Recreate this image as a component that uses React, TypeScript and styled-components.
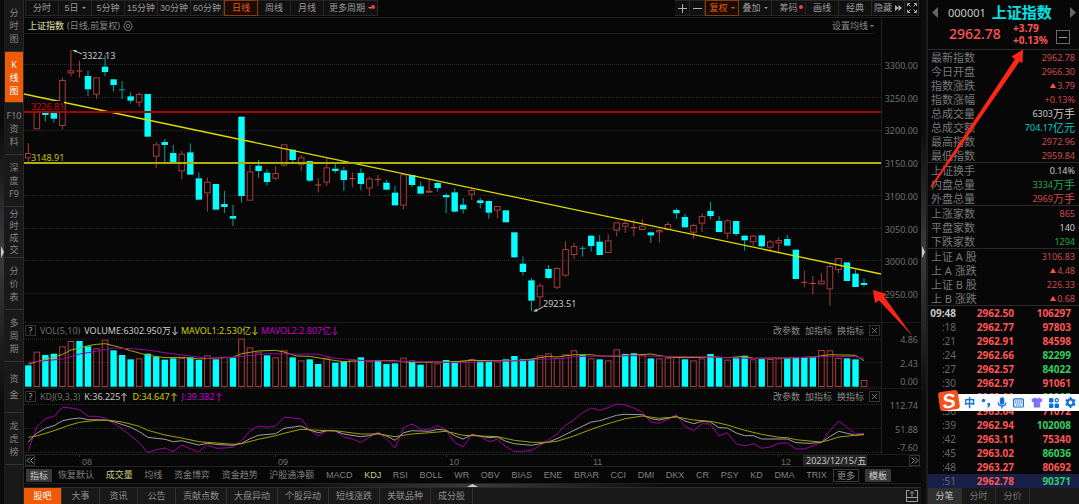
import React from "react";
import styled, { createGlobalStyle, css } from "styled-components";

const C = {
  bg: "#070707",
  line: "#222222",
  dim: "#6e6e6e",
  text: "#8a8a8a",
  light: "#c8c8c8",
  orange: "#ee5a06",
  red: "#cf4a4a",
  redHi: "#ff5555",
  green: "#22aa4c",
  greenHi: "#33cf5e",
  cyan: "#00ffff",
  yellow: "#cfcf00",
  magenta: "#c800c8",
};

const Global = createGlobalStyle`
  * { box-sizing: border-box; }
  body {
    margin: 0;
    background: ${C.bg};
    color: ${C.text};
    font: 9px/12px "Noto Sans", "Noto Sans CJK SC", sans-serif;
  }
  button {
    margin: 0;
    padding: 0;
    border: 0;
    background: none;
    color: inherit;
    font: inherit;
    white-space: nowrap;
    cursor: pointer;
  }
  svg { display: block; flex: none; }
`;

/* ---------- page frame ---------- */

const Page = styled.div`
  position: relative;
  display: grid;
  grid-template-columns: 5px 19px minmax(0, 1fr) 6px 152px;
  min-height: 100vh;
`;

const Rail = styled.div`
  display: flex;
  align-items: center;
  justify-content: center;
  background: linear-gradient(#0c0c0c 25%, #3c3c3c 50%, #0c0c0c 80%);
  border-right: 1px solid #1c1c1c;
`;

const Column = styled.main`
  display: flex;
  flex-direction: column;
  min-width: 0;
`;

/* ---------- left navigation ---------- */

const SideNav = styled.nav`
  display: flex;
  flex-direction: column;
  padding-bottom: 39px;
  background: #191919;
  border-right: 1px solid #2a2a2a;
`;

const SideItem = styled.button<{ $active?: boolean; $pitch?: number }>`
  flex: 1;
  display: flex;
  flex-direction: column;
  align-items: center;
  justify-content: center;
  line-height: ${(p) => p.$pitch ?? 13}px;
  color: ${(p) => (p.$active ? "#fff" : "#858585")};
  background: ${(p) => (p.$active ? C.orange : "transparent")};
  border-bottom: 1px solid #343434;
`;

/* ---------- top toolbar ---------- */

const Toolbar = styled.div`
  display: flex;
  height: 18px;
  padding: 0 2px 1px 1px;
  border-bottom: 1px solid #1d1d1d;
`;

const Spacer = styled.div`
  flex: 1;
`;

const ToolButton = styled.button<{ $w?: number; $active?: boolean }>`
  position: relative;
  display: flex;
  align-items: center;
  justify-content: center;
  gap: 3px;
  width: ${(p) => p.$w ?? 33}px;
  font-family: "Liberation Sans", "Noto Sans CJK SC", sans-serif;
  color: #9a9a9a;
  background: #101010;
  border: 1px solid #262626;
  border-left-width: 0;
  &:first-child { border-left-width: 1px; }
  ${(p) =>
    p.$active &&
    css`
      color: ${C.orange};
      background: #180c04;
      border: 1px solid #8a3a0c;
    `}
`;

const Caret = styled.span`
  border: 2px solid transparent;
  border-top-color: currentColor;
  border-bottom-width: 0;
`;

const Dot = styled.span`
  position: absolute;
  top: 4px;
  right: 2px;
  width: 4px;
  height: 4px;
  border-radius: 50%;
  background: #ff3b3b;
`;

/* ---------- chart panes ---------- */

const Pane = styled.section`
  display: grid;
  grid-template-columns: minmax(0, 1fr) 40px;
  border-top: 1px solid #1b1b1b;
  &:first-of-type { border-top: 0; }
`;

const Plot = styled.svg`
  width: 100%;
  height: auto;
  overflow: visible;
  font-family: "Noto Sans", "Noto Sans CJK SC", sans-serif;
`;

const TitleRow = styled.header`
  display: flex;
  align-items: center;
  gap: 3px;
  height: 16px;
  margin-right: 7px;
  padding-left: 4px;
  border-bottom: 1px solid #1e1e1e;
`;

const Title = styled.strong`
  font-weight: 500;
  color: #c9cc95;
`;

const MaButton = styled.button`
  display: flex;
  align-items: center;
  gap: 2px;
  margin-left: auto;
`;

const PaneHeader = styled.header`
  display: flex;
  align-items: center;
  height: 15px;
  padding: 0 1px;
`;

const BoxButton = styled.button`
  display: flex;
  align-items: center;
  justify-content: center;
  width: 11px;
  height: 11px;
  line-height: 9px;
  color: #a0a0a0;
  border: 1px solid #333;
`;

const Reading = styled.span<{ $color: string; $gap?: number }>`
  display: flex;
  align-items: center;
  margin-left: ${(p) => p.$gap ?? 4}px;
  color: ${(p) => p.$color};
  white-space: nowrap;
`;

const PaneActions = styled.div`
  display: flex;
  align-items: center;
  gap: 5px;
  margin-left: auto;
`;

const PriceAxis = styled.div`
  display: flex;
  flex-direction: column;
  justify-content: space-between;
  padding: 42px 3px 21px 0;
  border-left: 1px solid ${C.line};
  text-align: right;
  color: ${C.dim};
`;

const SmallAxis = styled.div`
  display: grid;
  grid-template-rows: 24px 18px 12px;
  padding: 11px 3px 0 0;
  border-left: 1px solid ${C.line};
  text-align: right;
  color: ${C.dim};
`;

const DateRow = styled.div`
  display: grid;
  grid-template-columns: minmax(0, 1fr) 40px;
  align-items: center;
  height: 13px;
  border-top: 1px solid #1c1c1c;
  border-bottom: 1px solid #222;
`;

const DateEnd = styled.div`
  display: flex;
  justify-content: flex-end;
  padding-right: 1px;
`;

/* ---------- lower bars ---------- */

const IndicatorBar = styled.div`
  display: flex;
  align-items: center;
  height: 16px;
  padding: 0 30px 0 2px;
`;

const IndicatorList = styled.div`
  flex: 1;
  display: flex;
  justify-content: space-between;
  padding: 0 6px;
`;

const Indicator = styled.button<{ $active?: boolean }>`
  font-family: "Liberation Sans", "Noto Sans CJK SC", sans-serif;
  color: ${(p) => (p.$active ? "#c9cc85" : "#808080")};
`;

const Chip = styled.button<{ $filled?: boolean }>`
  width: 26px;
  height: 13px;
  line-height: 11px;
  color: ${(p) => (p.$filled ? "#cfcfcf" : "#909090")};
  background: ${(p) => (p.$filled ? "#383838" : "transparent")};
  border: 1px solid #383838;
  & + & { margin-left: 6px; }
`;

const Drawer = styled.div`
  display: flex;
  justify-content: center;
  align-items: flex-end;
  height: 4px;
  background: linear-gradient(90deg, #0b0b0b 30%, #3c3c3c 50%, #0b0b0b 72%);
  border-top: 1px solid #222;
`;

const BottomTabs = styled.nav`
  flex: 1;
  display: flex;
  align-items: stretch;
  min-height: 17px;
  padding-right: 3px;
  background: #191919;
  border-top: 1px solid #2a2a2a;
`;

const BottomTab = styled.button<{ $active?: boolean }>`
  min-width: 38px;
  padding: 0 7px;
  color: ${(p) => (p.$active ? "#fff" : "#8f8f8f")};
  background: ${(p) => (p.$active ? C.orange : "transparent")};
  border-right: 1px solid #303030;
`;

const Upload = styled.button`
  display: flex;
  align-items: center;
  margin-left: auto;
`;

/* ---------- quote panel ---------- */

const Quote = styled.aside`
  display: flex;
  flex-direction: column;
  border-left: 1px solid #1e1e1e;
`;

const QuoteHead = styled.header`
  height: 50px;
  padding: 4px 3px 0 4px;
  border-bottom: 1px solid #2a2a2a;
`;

const NameLine = styled.div`
  display: flex;
  align-items: center;
  height: 17px;
`;

const Code = styled.span`
  margin-left: 10px;
  font-size: 11px;
  color: ${C.light};
`;

const Name = styled.h1`
  flex: 1;
  margin: 0 0 0 6px;
  font-size: 15px;
  line-height: 17px;
  font-weight: 700;
  color: #00e4e4;
`;

const PriceLine = styled.div`
  display: flex;
  align-items: center;
  height: 26px;
  padding-left: 17px;
  color: ${C.redHi};
`;

const Price = styled.span`
  width: 64px;
  font-size: 14px;
  font-weight: 500;
`;

const Change = styled.div`
  flex: 1;
  display: grid;
  font-size: 10px;
  line-height: 12px;
  font-weight: 700;
`;

const MinusBox = styled.button`
  width: 14px;
  height: 14px;
  margin: 6px 6px 0 0;
  border: 1px solid #6a6a6a;
  display: flex;
  align-items: center;
  justify-content: center;
  &::before {
    content: "";
    width: 8px;
    height: 1px;
    background: #9a9a9a;
  }
`;

const Group = styled.table<{ $n: number }>`
  flex: ${(p) => p.$n} 1 0;
  display: flex;
  border-bottom: 1px solid #2a2a2a;
  tbody {
    flex: 1;
    display: flex;
    flex-direction: column;
  }
  &:last-of-type { border-bottom: 0; }
`;

const StatRow = styled.tr`
  flex: 1;
  display: flex;
  align-items: center;
  justify-content: space-between;
  min-height: 14px;
  padding: 0 4px 0 3px;
  line-height: 13px;
  th {
    padding: 0;
    font-size: 11px;
    font-weight: 400;
    color: #777;
  }
`;

const StatValue = styled.td<{ $color: string }>`
  display: flex;
  align-items: center;
  padding: 0;
  color: ${(p) => p.$color};
`;

const Unit = styled.span`
  font-size: 11px;
`;

const Rise = styled.i`
  margin-right: 1px;
  border: 3px solid transparent;
  border-top-width: 0;
  border-bottom: 5px solid #ff5050;
`;

const TickRow = styled.tr<{ $active?: boolean }>`
  flex: 1;
  display: grid;
  grid-template-columns: 28px 58px 57px;
  align-items: center;
  min-height: 14px;
  font-size: 10px;
  line-height: 13px;
  text-align: right;
  background: ${(p) => (p.$active ? "#182048" : "transparent")};
`;

const Tick = styled.td<{ $color: string; $plain?: boolean }>`
  padding: 0;
  color: ${(p) => p.$color};
  font-weight: ${(p) => (p.$plain ? 400 : 700)};
`;

const QuoteTabs = styled.nav`
  display: flex;
  height: 16px;
  background: #191919;
`;

const QuoteTab = styled.button<{ $active?: boolean }>`
  width: 34px;
  color: ${(p) => (p.$active ? "#c4c4c4" : "#777")};
  background: ${(p) => (p.$active ? "#303030" : "transparent")};
  border-right: 1px solid #2c2c2c;
`;

/* ---------- layers over the page ---------- */

const Arrows = styled.svg`
  position: absolute;
  top: 0;
  right: 0;
  pointer-events: none;
`;

const InputBar = styled.div`
  position: absolute;
  top: 394px;
  right: 0;
  display: flex;
  align-items: center;
  justify-content: space-between;
  width: 138px;
  height: 17px;
  padding: 0 3px 0 23px;
  background: #fbfdff;
  color: #0f6fd8;
  border-radius: 2px 0 0 2px;
`;

const ImeLogo = styled.svg`
  position: absolute;
  left: -4px;
  top: -5px;
`;

const ImeMode = styled.button`
  font-size: 11px;
  font-weight: 700;
`;

/* ---------- market data ---------- */

type Candle = [string, number, number, number, number];

/* direction, high, body top, body bottom, low; in thirds of a pixel */
const candles: Candle[] = [
  ["u", 430, 459, 475, 487], ["u", 332, 332, 388, 388], ["d", 330, 338, 345, 365], ["d", 335, 339, 356, 368],
  ["u", 232, 240, 378, 388], ["u", 150, 211, 220, 229], ["u", 182, 212, 214, 233], ["d", 211, 228, 268, 288],
  ["u", 232, 232, 284, 297], ["d", 165, 200, 216, 229], ["d", 237, 238, 255, 275], ["d", 243, 268, 271, 297],
  ["d", 277, 289, 302, 310], ["u", 277, 282, 308, 321], ["d", 282, 282, 410, 410], ["u", 425, 433, 470, 504],
  ["d", 417, 426, 435, 493], ["d", 435, 459, 488, 488], ["u", 453, 461, 514, 539], ["d", 430, 457, 524, 524],
  ["d", 517, 535, 599, 599], ["u", 533, 545, 580, 635], ["d", 552, 552, 629, 629], ["d", 573, 612, 621, 639],
  ["d", 614, 648, 656, 678], ["d", 350, 350, 588, 608], ["u", 495, 514, 602, 602], ["d", 480, 497, 513, 533],
  ["d", 508, 518, 546, 557], ["u", 499, 519, 536, 540], ["u", 433, 433, 497, 500], ["d", 449, 449, 480, 490],
  ["u", 465, 472, 494, 513], ["d", 483, 483, 542, 546], ["u", 534, 554, 556, 577], ["u", 474, 502, 548, 558],
  ["d", 490, 506, 513, 520], ["d", 500, 511, 540, 573], ["u", 517, 535, 537, 562], ["d", 505, 519, 552, 571],
  ["u", 530, 535, 566, 588], ["u", 524, 537, 539, 558], ["d", 540, 548, 569, 571], ["d", 558, 578, 616, 617],
  ["u", 521, 523, 617, 628], ["d", 525, 525, 555, 561], ["d", 545, 559, 581, 581], ["u", 540, 572, 577, 577],
  ["d", 545, 549, 564, 575], ["d", 580, 585, 592, 639], ["d", 565, 577, 635, 638], ["d", 594, 614, 628, 641],
  ["u", 565, 570, 584, 600], ["d", 594, 601, 609, 625], ["d", 602, 603, 638, 656], ["u", 618, 618, 632, 655],
  ["d", 630, 631, 667, 667], ["d", 696, 697, 772, 774], ["d", 769, 791, 816, 827], ["d", 834, 841, 902, 933],
  ["u", 850, 856, 892, 921], ["d", 795, 807, 834, 837], ["u", 802, 804, 863, 868], ["u", 724, 747, 827, 831],
  ["u", 728, 738, 765, 777], ["d", 738, 744, 746, 770], ["d", 707, 707, 738, 754], ["d", 705, 725, 765, 765],
  ["u", 703, 721, 759, 759], ["u", 667, 667, 692, 709], ["u", 656, 669, 680, 699], ["u", 658, 681, 684, 709],
  ["u", 657, 677, 690, 690], ["d", 695, 697, 706, 729], ["u", 685, 690, 697, 728], ["u", 665, 672, 690, 690],
  ["d", 625, 630, 640, 656], ["d", 641, 651, 682, 682], ["u", 672, 675, 698, 716], ["u", 640, 648, 671, 696],
  ["d", 606, 633, 648, 659], ["d", 648, 663, 696, 696], ["u", 658, 661, 701, 716], ["d", 663, 663, 702, 708],
  ["d", 706, 707, 721, 752], ["u", 704, 707, 727, 738], ["d", 704, 706, 739, 745], ["u", 720, 724, 743, 750],
  ["u", 711, 720, 730, 760], ["d", 705, 717, 737, 737], ["d", 749, 749, 837, 837], ["u", 812, 846, 848, 862],
  ["u", 828, 850, 851, 883], ["u", 819, 842, 853, 855], ["u", 789, 798, 868, 918], ["u", 774, 774, 810, 820],
  ["d", 787, 787, 843, 843], ["d", 809, 821, 861, 861], ["d", 835, 849, 855, 860],
];

const volumeTops = [
  136, 95, 105, 101, 79, 63, 63, 79, 85, 59, 91, 105, 118, 115, 101, 110, 119, 115, 114, 112,
  120, 106, 118, 110, 113, 56, 82, 97, 106, 112, 91, 112, 121, 118, 132, 113, 128, 124, 118, 112,
  122, 120, 132, 130, 113, 122, 134, 126, 130, 120, 124, 122, 117, 124, 122, 124, 118, 108, 118, 117,
  106, 100, 114, 103, 91, 105, 115, 118, 121, 88, 102, 100, 105, 115, 115, 113, 110, 118, 121, 115,
  102, 112, 119, 112, 107, 118, 115, 117, 115, 115, 112, 112, 112, 90, 91, 114, 115, 118, 180,
];

/* days whose volume bar is drawn hollow */
const redVolumes = new Set([
  1, 4, 5, 8, 9, 13, 18, 21, 23, 25, 26, 27, 29, 30, 32, 35, 38, 40, 44, 47, 48, 51, 52, 55,
  60, 61, 62, 63, 64, 66, 68, 69, 72, 74, 75, 76, 78, 79, 82, 85, 87, 88, 93, 94, 95, 98,
]);

const ma5 =
  "85,133 110,125 136,118 162,112 188,103 213,90 239,84 264,77 290,73 316,71 341,77 367,84 392,92 443,106 495,113 545,112 596,117 650,114 699,112 725,101 775,93 827,91 852,96 890,108 930,109 980,118 1031,125 1080,122 1180,122 1230,127 1290,126 1338,126 1380,124 1416,121 1470,122 1517,122 1569,121 1620,113 1645,109 1671,111 1722,104 1774,104 1799,108 1850,109 1901,105 1952,102 2002,111 2055,113 2106,112 2131,110 2182,113 2234,109 2260,115 2362,114 2438,111 2489,104 2566,106 2592,122";
const ma10 =
  "85,127 136,122 188,117 239,102 290,94 341,84 400,86 443,90 495,98 571,108 622,115 699,112 725,109 802,101 852,102 950,102 1006,115 1082,121 1180,124 1280,125 1380,128 1480,124 1569,122 1620,118 1696,115 1722,110 1799,108 1901,107 1978,109 2106,110 2182,113 2285,116 2388,113 2489,109 2566,110 2592,116";
const kdjJ =
  "85,392 110,320 136,296 162,289 188,262 213,264 239,269 264,289 290,289 316,294 341,310 367,327 392,347 418,368 443,398 469,389 495,384 520,395 545,375 571,386 596,395 622,374 648,385 674,384 699,382 725,361 750,333 775,318 802,322 827,318 852,292 878,294 903,296 929,330 955,348 981,332 1006,332 1031,351 1057,357 1082,367 1108,352 1134,336 1160,357 1185,384 1211,323 1235,312 1262,327 1288,328 1313,316 1338,329 1364,368 1389,381 1416,343 1441,349 1467,365 1492,358 1517,380 1543,394 1569,394 1595,391 1620,376 1671,342 1696,316 1722,299 1748,278 1774,264 1799,271 1824,263 1850,252 1875,254 1901,264 1927,277 1952,306 1978,310 2002,299 2029,284 2055,319 2081,332 2106,311 2131,312 2157,348 2182,338 2209,372 2234,377 2260,371 2285,385 2310,381 2336,370 2362,369 2388,387 2413,387 2464,368 2489,333 2516,303 2541,322 2566,341 2592,341";
const kdjK =
  "85,366 110,340 136,325 162,317 188,302 213,297 239,294 264,299 316,300 341,305 392,322 418,335 443,352 495,358 520,365 545,362 596,375 622,370 660,374 699,376 725,370 750,356 775,346 827,341 852,325 903,318 929,330 955,338 981,332 1006,333 1031,342 1082,350 1108,347 1134,340 1160,348 1185,361 1211,338 1235,332 1288,334 1313,328 1338,331 1364,347 1389,357 1416,344 1467,353 1492,351 1517,364 1543,371 1595,376 1620,371 1645,366 1671,356 1722,331 1774,306 1799,302 1850,286 1875,283 1927,284 1952,296 1978,300 2029,289 2055,303 2081,311 2106,304 2131,306 2157,323 2182,324 2209,339 2234,347 2260,347 2285,357 2362,357 2388,368 2430,370 2464,367 2489,350 2516,334 2541,340 2566,346 2592,344";
const kdjD =
  "85,352 110,348 162,332 213,314 239,307 290,301 330,301 367,306 418,319 443,331 495,345 545,354 596,365 650,369 699,373 725,371 775,358 827,347 852,340 903,328 955,331 1006,332 1082,342 1134,342 1185,350 1235,342 1288,338 1338,334 1389,346 1492,350 1543,361 1595,367 1645,367 1671,364 1722,348 1774,328 1824,311 1875,296 1927,288 1978,295 2029,291 2081,300 2131,304 2160,310 2182,315 2234,331 2285,343 2336,352 2362,353 2388,359 2438,364 2464,366 2489,360 2516,351 2566,346 2592,342";

/* chart coordinates: data is stored in thirds of a pixel */
const barX = (i: number) => 28.3 + i * 8.528;
const curve = (points: string, dy: number) =>
  points
    .split(" ")
    .map((p) => p.split(",").map(Number))
    .map(([x, y]) => `${(x / 3).toFixed(1)},${(y / 3 + dy).toFixed(1)}`)
    .join(" ");

const Curve = ({ points, color }: { points: string; color: string }) => (
  <polyline points={curve(points, 320)} fill="none" stroke={color} strokeWidth={1} />
);

const Grid = ({ ys }: { ys: number[] }) => (
  <g stroke="#2b2b2b" strokeDasharray="1 1">
    {ys.map((y) => (
      <line key={y} x1={24} x2={881} y1={y} y2={y} />
    ))}
  </g>
);

const Candles = () => (
  <g>
    {candles.map(([dir, h, t, b, l], i) => {
      const x = barX(i);
      const up = dir === "u";
      const thin = b - t <= 3;
      const stroke = up ? "#a83c3c" : "#00a0a0";
      return (
        <g key={i} stroke={stroke}>
          {h < t && <line x1={x} x2={x} y1={h / 3} y2={t / 3} />}
          {l > b && <line x1={x} x2={x} y1={b / 3} y2={l / 3} />}
          {thin ? (
            <line x1={x - 3} x2={x + 3} y1={(t + b) / 6} y2={(t + b) / 6} stroke={up ? "#d04848" : "#00b4b4"} />
          ) : up ? (
            <rect x={x - 2.8} y={t / 3 + 0.5} width={5.6} height={Math.max((b - t) / 3 - 1, 1)} fill="none" />
          ) : (
            <rect x={x - 3.2} y={t / 3} width={6.4} height={(b - t) / 3} fill={C.cyan} stroke="none" />
          )}
        </g>
      );
    })}
  </g>
);

const Volumes = () => (
  <g>
    {volumeTops.map((v, i) => {
      const x = barX(i);
      const y = 320 + v / 3;
      return redVolumes.has(i) ? (
        <rect key={i} x={x - 2.8} y={y + 0.5} width={5.6} height={386 - y} fill="none" stroke="#a83c3c" />
      ) : (
        <rect key={i} x={x - 3.2} y={y} width={6.4} height={386.7 - y} fill={C.cyan} />
      );
    })}
  </g>
);

const Move = ({ up }: { up?: boolean }) => (
  <svg width="8" height="10" viewBox="0 0 8 10" fill="none" stroke="currentColor">
    <path d={up ? "M4 9.5V1.5M1.5 4L4 1.2L6.5 4" : "M4 .5V8.5M1.5 6L4 8.8L6.5 6"} />
  </svg>
);

const Actions = () => (
  <PaneActions>
    <button>改参数</button>
    <button>加指标</button>
    <button>换指标</button>
    <BoxButton aria-label="关闭">
      <svg width="7" height="7" viewBox="0 0 7 7" stroke="#707070">
        <path d="M1 1L6 6M6 1L1 6" />
      </svg>
    </BoxButton>
  </PaneActions>
);

const sideItems: { lines: string[]; active?: boolean; pitch?: number }[] = [
  { lines: ["分", "时", "图"] },
  { lines: ["K", "线", "图"], active: true },
  { lines: ["F10", "资", "料"] },
  { lines: ["深", "度", "F9"] },
  { lines: ["分", "时", "成", "交"], pitch: 12 },
  { lines: ["分", "价", "表"] },
  { lines: ["多", "周", "期"] },
  { lines: ["资", "金"], pitch: 16 },
  { lines: ["龙", "虎", "榜"] },
];

const indicators =
  "恢复默认 成交量 均线 资金博弈 资金趋势 沪股通净额 MACD KDJ RSI BOLL WR OBV BIAS ENE BRAR CCI DMI DKX CR PSY KD DMA TRIX".split(" ");
const bottomTabs = "股吧 大事 资讯 公告 贡献点数 大盘异动 个股异动 短线涨跌 关联品种 成分股".split(" ");

type Stat = { label: string; value: string; color: string; unit?: string; rise?: boolean };
const stats: Stat[][] = [
  [
    { label: "最新指数", value: "2962.78", color: C.red },
    { label: "今日开盘", value: "2966.30", color: C.red },
    { label: "指数涨跌", value: "3.79", color: C.red, rise: true },
    { label: "指数涨幅", value: "+0.13%", color: C.red },
    { label: "总成交量", value: "6303", color: C.light, unit: "万手" },
    { label: "总成交额", value: "704.17", color: "#00cccc", unit: "亿元" },
    { label: "最高指数", value: "2972.96", color: C.red },
    { label: "最低指数", value: "2959.84", color: C.red },
  ],
  [
    { label: "上证换手", value: "0.14%", color: C.light },
    { label: "内盘总量", value: "3334", color: C.green, unit: "万手" },
    { label: "外盘总量", value: "2969", color: C.red, unit: "万手" },
  ],
  [
    { label: "上涨家数", value: "865", color: C.red },
    { label: "平盘家数", value: "140", color: C.light },
    { label: "下跌家数", value: "1294", color: C.green },
  ],
  [
    { label: "上证 A 股", value: "3106.83", color: C.red },
    { label: "上 A 涨跌", value: "4.48", color: C.red, rise: true },
    { label: "上证 B 股", value: "226.33", color: C.red },
    { label: "上 B 涨跌", value: "0.68", color: C.red, rise: true },
  ],
];

const ticks: [string, string, string, boolean?][] = [
  ["09:48", "2962.50", "106297"],
  [":18", "2962.77", "97803"],
  [":21", "2962.91", "84598"],
  [":24", "2962.66", "82299", true],
  [":27", "2962.57", "84022", true],
  [":30", "2962.97", "91061"],
  [":33", "2963.00", "80885", true],
  [":36", "2963.04", "71072"],
  [":39", "2962.94", "102008", true],
  [":42", "2963.11", "75340"],
  [":45", "2963.02", "86036", true],
  [":48", "2963.27", "80692"],
  [":51", "2962.78", "90371", true],
];

export default function App() {
  return (
    <Page>
      <Global />
      <Rail>
        <svg width="3" height="12" viewBox="0 0 3 12">
          <path d="M0 0L3 6L0 12Z" fill="#ccc" />
        </svg>
      </Rail>

      <SideNav>
        {sideItems.map((it) => (
          <SideItem key={it.lines.join("")} $active={it.active} $pitch={it.pitch}>
            {it.lines.map((l) => (
              <span key={l}>{l}</span>
            ))}
          </SideItem>
        ))}
      </SideNav>

      <Column>
        <Toolbar>
          <ToolButton $w={34}>分时</ToolButton>
          <ToolButton>5日 <Caret /></ToolButton>
          <ToolButton>5分钟</ToolButton>
          <ToolButton>15分钟</ToolButton>
          <ToolButton>30分钟</ToolButton>
          <ToolButton>60分钟</ToolButton>
          <ToolButton $w={34} $active>日线</ToolButton>
          <ToolButton>周线</ToolButton>
          <ToolButton>月线</ToolButton>
          <ToolButton $w={54}>更多周期<Caret /><Dot /></ToolButton>
          <Spacer />
          <ToolButton $w={15} aria-label="放大">
            <svg width="9" height="9" viewBox="0 0 9 9" stroke="#b0b0b0"><path d="M0 4.5H9M4.5 0V9" /></svg>
          </ToolButton>
          <ToolButton $w={15} aria-label="缩小">
            <svg width="9" height="9" viewBox="0 0 9 9" stroke="#b0b0b0"><path d="M0 4.5H9" /></svg>
          </ToolButton>
          <ToolButton $w={34} $active>复权<Caret /></ToolButton>
          <ToolButton>叠加<Caret /></ToolButton>
          <ToolButton $w={34}>筹码<Dot /></ToolButton>
          <ToolButton>画线</ToolButton>
          <ToolButton>经典</ToolButton>
          <ToolButton>
            隐藏
            <svg width="7" height="6" viewBox="0 0 7 6" fill="#b0b0b0"><path d="M0 0L3.5 3L0 6ZM3.5 0L7 3L3.5 6Z" /></svg>
          </ToolButton>
          <ToolButton $w={14} aria-label="全屏">
            <svg width="10" height="10" viewBox="0 0 10 10" fill="none" stroke="#b0b0b0">
              <path d="M.5 3V.5H3M7 .5H9.5V3M9.5 7V9.5H7M3 9.5H.5V7M1 1L3.5 3.5M9 1L6.5 3.5M9 9L6.5 6.5M1 9L3.5 6.5" />
            </svg>
          </ToolButton>
        </Toolbar>

        <Pane>
          <div>
            <TitleRow>
              <Title>上证指数</Title>
              <span>(日线,前复权)</span>
              <svg width="10" height="10" viewBox="0 0 10 10" fill="none" stroke="#777">
                <path d="M3 .7H7L9.3 5L7 9.3H3L.7 5Z" />
                <circle cx="5" cy="5" r="1.7" />
              </svg>
              <MaButton>设置均线<Caret /></MaButton>
            </TitleRow>
            <Plot viewBox="24 34 857 288" role="img" aria-label="上证指数日线">
              <Grid ys={[64.5, 97.5, 130.5, 163, 195.5, 228.5, 260.5, 293.5]} />
              <Candles />
              <line x1={24} y1={94} x2={881} y2={274} stroke="#dede00" strokeWidth={1.3} />
              <rect x={31} y={101} width={33} height={10} fill={C.bg} />
              <rect x={31} y={153} width={33} height={9} fill={C.bg} />
              <rect x={24} y={111} width={857} height={2} fill="#a80000" />
              <rect x={24} y={162} width={857} height={2} fill="#b0b000" />
              <g fontSize={9}>
                <text x={31} y={110} fill="#d80000">3226.81</text>
                <text x={31} y={161} fill="#c4c400">3148.91</text>
                <text x={82} y={59} fill={C.light}>3322.13</text>
                <text x={543} y={307} fill={C.light}>2923.51</text>
              </g>
              <g stroke={C.light} fill={C.light}>
                <path d="M82 54L75 51" fill="none" />
                <path d="M72 50L77 50.2L75.6 52.6Z" stroke="none" />
                <path d="M543 307L535 311" fill="none" />
                <path d="M533 311.6L536.4 308.8L537.8 311.4Z" stroke="none" />
              </g>
            </Plot>
          </div>
          <PriceAxis>
            {["3300.00", "3250.00", "3200.00", "3150.00", "3100.00", "3050.00", "3000.00", "2950.00"].map((p) => (
              <span key={p}>{p}</span>
            ))}
          </PriceAxis>
        </Pane>

        <Pane>
          <div>
            <PaneHeader>
              <BoxButton>?</BoxButton>
              <Reading $color={C.dim}>VOL(5,10)</Reading>
              <Reading $color={C.light}>VOLUME:6302.950万<Move /></Reading>
              <Reading $color={C.yellow} $gap={2}>MAVOL1:2.530亿<Move /></Reading>
              <Reading $color={C.magenta} $gap={2}>MAVOL2:2.807亿<Move /></Reading>
              <Actions />
            </PaneHeader>
            <Plot viewBox="24 338 857 50" role="img" aria-label="成交量">
              <Grid ys={[339, 362.5, 387]} />
              <Volumes />
              <Curve points={ma5} color="#a8a800" />
              <Curve points={ma10} color="#a000a0" />
            </Plot>
          </div>
          <SmallAxis>
            <span>4.86</span>
            <span>2.43</span>
            <span>0.00</span>
          </SmallAxis>
        </Pane>

        <Pane>
          <div>
            <PaneHeader>
              <BoxButton>?</BoxButton>
              <Reading $color={C.dim}>KDJ(9,3,3)</Reading>
              <Reading $color={C.light}>K:36.225<Move up /></Reading>
              <Reading $color={C.yellow}>D:34.647<Move up /></Reading>
              <Reading $color={C.magenta}>J:39.382<Move up /></Reading>
              <Actions />
            </PaneHeader>
            <Plot viewBox="24 404 857 50" role="img" aria-label="KDJ">
              <Grid ys={[404.5, 428.5, 452.5]} />
              <Curve points={kdjJ} color="#a000a0" />
              <Curve points={kdjK} color="#a0a0a0" />
              <Curve points={kdjD} color="#a0a000" />
            </Plot>
          </div>
          <SmallAxis>
            <span>112.74</span>
            <span>51.88</span>
            <span>-7.60</span>
          </SmallAxis>
        </Pane>

        <DateRow>
          <Plot viewBox="24 455 857 11" role="img" aria-label="日期">
            <path d="M30 457.5L27 460.5L30 463.5M33.5 457.5L30.5 460.5L33.5 463.5" fill="none" stroke="#999" />
            <rect x={25.5} y={455.5} width={9} height={10} fill="none" stroke="#333" />
            <rect x={803} y={455} width={64} height={11} fill="#262626" />
            <g fontSize={9} fill={C.dim} fontFamily="Liberation Sans, sans-serif">
              <text x={82} y={465}>08</text>
              <text x={278} y={465}>09</text>
              <text x={449} y={465}>10</text>
              <text x={593} y={465}>11</text>
              <text x={781} y={465}>12</text>
            </g>
            <text x={806} y={464} fontSize={9} fill="#c4c4c4">2023/12/15/五</text>
            <path d="M79.5 455V457M275.5 455V457M446.5 455V457M591.5 455V457M778.5 455V457" stroke="#333" />
          </Plot>
          <DateEnd>
            <BoxButton aria-label="后移">
              <svg width="9" height="9" viewBox="0 0 9 9" fill="none" stroke="#999">
                <path d="M1.5 1.5L4.5 4.5L1.5 7.5M5 1.5L8 4.5L5 7.5" />
              </svg>
            </BoxButton>
          </DateEnd>
        </DateRow>

        <IndicatorBar>
          <Chip $filled>指标</Chip>
          <IndicatorList>
            {indicators.map((n) => (
              <Indicator key={n} $active={n === "KDJ" || n === "成交量"}>
                {n}
              </Indicator>
            ))}
          </IndicatorList>
          <Chip>更多</Chip>
          <Chip $filled>模板</Chip>
        </IndicatorBar>

        <Drawer>
          <svg width="11" height="3" viewBox="0 0 11 3"><path d="M0 3L5.5 0L11 3Z" fill="#ccc" /></svg>
        </Drawer>

        <BottomTabs>
          {bottomTabs.map((t, i) => (
            <BottomTab key={t} $active={i === 0}>{t}</BottomTab>
          ))}
          <Upload aria-label="展开">
            <svg width="12" height="12" viewBox="0 0 12 12" fill="none" stroke="#a0a0a0">
              <path d="M3.5 .5H.5V11.5H11.5V.5H8.5M.5 7.5H11.5M6 6.5V1.5M4 3.5L6 1.5L8 3.5" />
            </svg>
          </Upload>
        </BottomTabs>
      </Column>

      <Rail>
        <svg width="3" height="12" viewBox="0 0 3 12">
          <path d="M0 0L3 6L0 12Z" fill="#ccc" />
        </svg>
      </Rail>

      <Quote>
        <QuoteHead>
          <NameLine>
            <svg width="6" height="11" viewBox="0 0 6 11"><path d="M6 0V11L0 5.5Z" fill="#666" /></svg>
            <Code>000001</Code>
            <Name>上证指数</Name>
            <svg width="6" height="11" viewBox="0 0 6 11"><path d="M0 0V11L6 5.5Z" fill="#666" /></svg>
          </NameLine>
          <PriceLine>
            <Price>2962.78</Price>
            <Change>
              <span>+3.79</span>
              <span>+0.13%</span>
            </Change>
            <MinusBox aria-label="收起" />
          </PriceLine>
        </QuoteHead>
        {stats.map((rows, g) => (
          <Group key={g} $n={rows.length}>
            <tbody>
              {rows.map(({ label, value, color, unit, rise }) => (
                <StatRow key={label}>
                  <th scope="row">{label}</th>
                  <StatValue $color={color}>
                    {rise && <Rise />}
                    {value}
                    {unit && <Unit>{unit}</Unit>}
                  </StatValue>
                </StatRow>
              ))}
            </tbody>
          </Group>
        ))}
        <Group $n={ticks.length}>
          <tbody>
            {ticks.map(([time, price, vol, sell], i) => (
              <TickRow key={time} $active={i === ticks.length - 1}>
                <Tick $color={i ? "#666" : C.light} $plain={i > 0}>{time}</Tick>
                <Tick $color={C.redHi}>{price}</Tick>
                <Tick $color={sell ? C.greenHi : C.redHi}>{vol}</Tick>
              </TickRow>
            ))}
          </tbody>
        </Group>
        <QuoteTabs>
          <QuoteTab $active>分笔</QuoteTab>
          <QuoteTab>分时</QuoteTab>
          <QuoteTab>分价</QuoteTab>
        </QuoteTabs>
      </Quote>

      <Arrows width="219" height="340" viewBox="860 0 219 340" fill="#ff2617">
        <path d="M930.5 186.5L1015 59L1011.5 56.5L1023 49.5L1022.5 63L1019.5 61.5L932 187.5Z" />
        <path d="M873 290L887 294L884 296.5L912.5 336L879 300.5L875 303Z" />
      </Arrows>

      <InputBar>
        <ImeLogo width="24" height="24" viewBox="0 0 24 24">
          <g transform="rotate(-8 12 12)">
            <rect x="2" y="2" width="20" height="19" rx="3" fill="#f4511e" />
            <text x="12" y="19" textAnchor="middle" fontFamily="Liberation Sans, sans-serif" fontSize="20" fontWeight="700" fontStyle="italic" fill="#fff">S</text>
          </g>
        </ImeLogo>
        <ImeMode>中</ImeMode>
        <svg width="10" height="11" viewBox="0 0 10 11" fill="#0f6fd8">
          <circle cx="2.5" cy="3.5" r="1.7" />
          <path d="M6.5 6H9V8.5L7.5 10.5H6.3L7.2 8.5H6.5Z" />
        </svg>
        <svg width="10" height="12" viewBox="0 0 10 12" fill="none" stroke="#0f6fd8" strokeWidth="1.3">
          <rect x="3.4" y="1" width="3.2" height="6" rx="1.6" fill="#0f6fd8" />
          <path d="M1.2 5.5C1.2 10 8.8 10 8.8 5.5M5 9V11.4" />
        </svg>
        <svg width="11" height="10" viewBox="0 0 11 10" fill="none" stroke="#0f6fd8" strokeWidth="1.2">
          <rect x=".6" y=".8" width="9.8" height="8.2" rx="1" />
          <path d="M2 3H9M2 5H9M3 7H8" strokeDasharray="1.4 .5" />
        </svg>
        <svg width="12" height="11" viewBox="0 0 12 11">
          <defs>
            <linearGradient id="shirt" x1="0" x2="1">
              <stop offset="0" stopColor="#4a7cf7" />
              <stop offset="1" stopColor="#b06cf0" />
            </linearGradient>
          </defs>
          <path d="M4 .5Q6 2.5 8 .5L11.7 2.5L10.5 5.3L9.2 5V10.5H2.8V5L1.5 5.3L.3 2.5Z" fill="url(#shirt)" />
        </svg>
        <svg width="10" height="10" viewBox="0 0 10 10" fill="#0f6fd8">
          <rect x="0" y="0" width="4.4" height="4.4" rx="1" />
          <circle cx="7.7" cy="2.2" r="1.6" fill="none" stroke="#0f6fd8" strokeWidth="1.2" />
          <rect x="0" y="5.6" width="4.4" height="4.4" rx="1" />
          <rect x="5.6" y="5.6" width="4.4" height="4.4" rx="1" />
        </svg>
        <svg width="11" height="11" viewBox="0 0 11 11">
          <circle cx="5.5" cy="5.5" r="3.1" fill="none" stroke="#0f6fd8" strokeWidth="2.4" />
          <path d="M5.5 0V2M5.5 9V11M.7 2.8L2.4 3.7M8.6 7.3L10.3 8.2M.7 8.2L2.4 7.3M8.6 3.7L10.3 2.8" stroke="#0f6fd8" strokeWidth="1.8" />
        </svg>
      </InputBar>
    </Page>
  );
}
